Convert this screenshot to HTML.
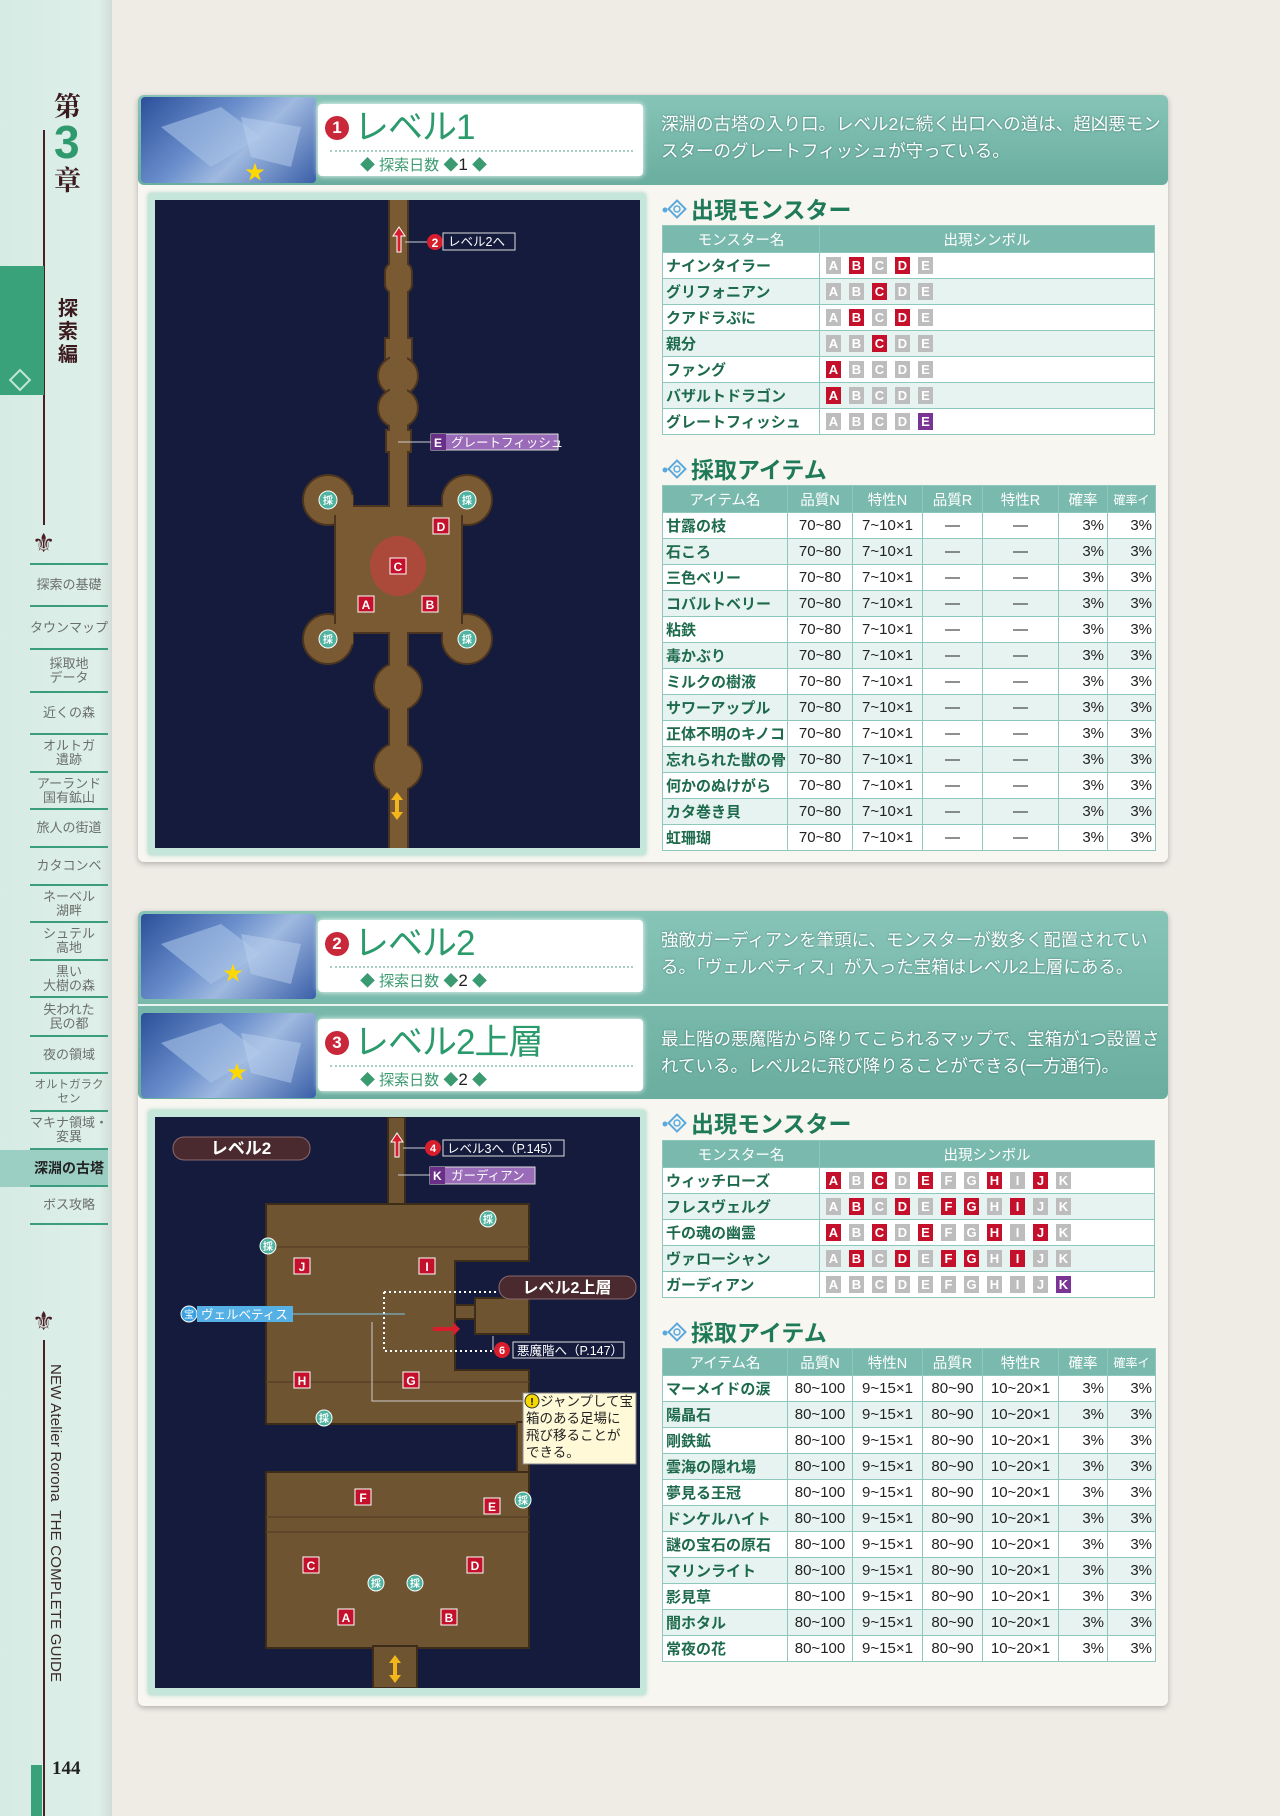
<!DOCTYPE html>
<html><head><meta charset="utf-8">
<style>
*{margin:0;padding:0;box-sizing:border-box}
body{width:1280px;height:1816px;position:relative;overflow:hidden;background:#efebe5;font-family:"Liberation Sans","Noto Sans CJK JP",sans-serif}
.abs{position:absolute}
#side{left:0;top:0;width:112px;height:1816px;background:linear-gradient(90deg,#d6ebe4 0%,#deefe9 88%,#d2dcd7 100%)}
.nav{position:absolute;left:30px;width:78px;text-align:center;color:#6b6f6c;font-size:13px;line-height:14px;display:flex;align-items:center;justify-content:center;border-bottom:2px solid #3c9c7e}
.panel{position:absolute;left:138px;width:1030px;background:#f8f6f1;border-radius:6px;box-shadow:0 2px 6px rgba(0,0,0,.25)}
.hbar{position:absolute;left:138px;width:1030px;background:linear-gradient(180deg,#86c4b7,#6aae9f);border-radius:6px}
.thumb{position:absolute;left:141px;width:175px;border-radius:4px;background:linear-gradient(135deg,#2c4f9a,#6b8fcc 40%,#9fb9e0 60%,#3a5fa8);overflow:hidden}
.tbox{position:absolute;left:318px;width:325px;background:#fff;border-radius:4px;box-shadow:0 0 6px #fff}
.num{position:absolute;width:24px;height:24px;border-radius:50%;background:#c8283a;color:#fff;font-weight:bold;font-size:17px;text-align:center;line-height:24px}
.ttl{position:absolute;color:#2b9a6c;font-size:35px;line-height:40px;letter-spacing:-1px}
.dots{position:absolute;left:12px;right:10px;border-top:2px dotted #a8cfc2}
.days{position:absolute;color:#3a9a70;font-size:15px}
.days b{color:#222;font-weight:normal;font-size:17px}
.desc{position:absolute;left:661px;width:500px;color:#fff;font-size:17.5px;line-height:27px;text-shadow:0 0 2px rgba(0,60,50,.5)}
.sec{position:absolute;left:661px;color:#1f7a5a;font-size:23px;font-weight:bold;line-height:26px}
.sec i{display:inline-block;width:30px;height:22px;vertical-align:-3px;position:relative}
table{position:absolute;border-collapse:collapse;table-layout:fixed;left:662px;width:493px}
td,th{border:1.5px solid #8ec8bc;font-size:15px;height:26px;padding:0 3px;white-space:nowrap;overflow:hidden}
th{background:#7ab9ad;color:#fff;font-weight:normal;font-size:14.5px;height:27px}
tr:nth-child(odd) td{background:#e7f3f1}
tr:nth-child(even) td{background:#fff}
td.n{color:#1d6a4c;font-weight:bold;font-size:15px}
td.c{text-align:center;color:#222}
td.r{text-align:right;color:#222}
td.sy{padding-left:6px}
.s{display:inline-block;width:15px;height:17px;margin-right:8px;background:#bdbdbd;color:#fff;font-size:13px;font-weight:bold;text-align:center;line-height:17px;vertical-align:middle}
.s.R{background:#c4102a}.s.P{background:#7a3494}
.frame{position:absolute;left:148px;width:498px;background:#c5e6da;border-radius:3px;box-shadow:0 0 4px #9fd3c2}
</style></head><body>
<div id="side" class="abs"></div>
<div class="abs" style="left:43px;top:130px;width:2px;height:395px;background:#4a1f26"></div>
<div class="abs" style="left:0;top:266px;width:44px;height:129px;background:#3aa27a"></div>
<div class="abs" style="left:12px;top:372px;width:16px;height:16px;border:2px solid #bfe6d6;transform:rotate(45deg)"></div>
<div class="abs" style="left:54px;top:92px;font-size:27px;font-weight:bold;color:#3b1a20;line-height:30px;font-family:'Liberation Serif','Noto Serif CJK SC',serif">第</div>
<div class="abs" style="left:54px;top:118px;font-size:46px;font-weight:bold;color:#2e9a6e;line-height:48px">3</div>
<div class="abs" style="left:54px;top:166px;font-size:27px;font-weight:bold;color:#3b1a20;line-height:30px;font-family:'Liberation Serif','Noto Serif CJK SC',serif">章</div>
<div class="abs" style="left:58px;top:298px;width:22px;font-size:20px;font-weight:bold;color:#3b1a20;line-height:23px">探索編</div>
<div class="abs" style="left:32px;top:528px;font-size:26px;color:#4a1f26">⚜</div>
<div class="abs" style="left:30px;top:563px;width:78px;border-top:2px solid #3c9c7e"></div>
<div class="nav" style="top:565px;height:42px">探索の基礎</div>
<div class="nav" style="top:607px;height:43px">タウンマップ</div>
<div class="nav" style="top:650px;height:43px">採取地<br>データ</div>
<div class="nav" style="top:693px;height:42px">近くの森</div>
<div class="nav" style="top:735px;height:38px">オルトガ<br>遺跡</div>
<div class="nav" style="top:773px;height:37px">アーランド<br>国有鉱山</div>
<div class="nav" style="top:810px;height:38px">旅人の街道</div>
<div class="nav" style="top:848px;height:38px">カタコンベ</div>
<div class="nav" style="top:886px;height:37px">ネーベル<br>湖畔</div>
<div class="nav" style="top:923px;height:38px">シュテル<br>高地</div>
<div class="nav" style="top:961px;height:37px">黒い<br>大樹の森</div>
<div class="nav" style="top:998px;height:39px">失われた<br>民の都</div>
<div class="nav" style="top:1037px;height:37px">夜の領域</div>
<div class="nav" style="top:1074px;height:38px;font-size:11.5px">オルトガラクセン</div>
<div class="nav" style="top:1112px;height:38px">マキナ領域・<br>変異</div>
<div class="abs" style="left:0;top:1150px;width:108px;height:37px;background:#9ccfc3"></div>
<div class="nav" style="top:1150px;height:37px;color:#222;font-weight:bold;font-size:14px">深淵の古塔</div>
<div class="nav" style="top:1187px;height:38px">ボス攻略</div>
<div class="abs" style="left:32px;top:1306px;font-size:26px;color:#4a1f26">⚜</div>
<div class="abs" style="left:43px;top:1340px;width:2px;height:476px;background:#4a1f26"></div>
<div class="abs" style="left:47px;top:1364px;writing-mode:vertical-rl;font-size:15px;color:#3b2a2a;letter-spacing:0.2px">NEW Atelier Rorona&nbsp; THE COMPLETE GUIDE</div>
<div class="abs" style="left:31px;top:1765px;width:11px;height:51px;background:#3aa27a"></div>
<div class="abs" style="left:52px;top:1758px;font-size:19px;font-weight:bold;color:#222;font-family:'Liberation Serif',serif">144</div>

<!-- PANEL 1 -->
<div class="panel" style="top:95px;height:767px"></div>
<div class="hbar" style="top:95px;height:90px"></div>
<div class="thumb" style="top:97px;height:86px"><svg width="175" height="86"><path d="M20 30 L80 10 L120 40 L70 70Z" fill="#a9c3e6" opacity=".6"/><path d="M100 20 L160 30 L150 70 L110 60Z" fill="#b9cfee" opacity=".5"/><text x="104" y="82" fill="#ffd800" font-size="20">★</text></svg></div>
<div class="tbox" style="top:104px;height:72px">
<div class="num" style="left:7px;top:12px">1</div><div class="ttl" style="left:36px;top:4px">レベル1</div>
<div class="dots" style="top:46px"></div><div class="days" style="left:42px;top:50px">◆ 探索日数 ◆<b>1</b> ◆</div></div>
<div class="desc" style="top:111px">深淵の古塔の入り口。レベル2に続く出口への道は、超凶悪モンスターのグレートフィッシュが守っている。</div>

<div class="frame" style="top:193px;height:662px"></div>
<svg class="abs" style="left:155px;top:200px" width="485" height="648" font-family="Liberation Sans,Noto Sans CJK JP,sans-serif">
<rect width="485" height="648" fill="#151b3c"/>
<g fill="#7a5a32" stroke="#4b3520" stroke-width="2">
<rect x="234" y="0" width="19" height="648"/>
<rect x="230" y="62" width="27" height="32" rx="10"/>
<rect x="230" y="138" width="27" height="26"/>
<circle cx="243" cy="176" r="20"/><circle cx="243" cy="208" r="20"/>
<rect x="231" y="230" width="25" height="22"/>
<circle cx="173" cy="300" r="25"/><circle cx="312" cy="300" r="25"/><circle cx="173" cy="439" r="25"/><circle cx="312" cy="439" r="25"/>
<rect x="180" y="306" width="127" height="127"/>
<circle cx="243" cy="487" r="24"/><circle cx="243" cy="567" r="24"/>
</g>
<g fill="#7a5a32"><rect x="235" y="0" width="17" height="648"/><rect x="181" y="307" width="125" height="125"/><rect x="178" y="295" width="20" height="20"/><rect x="288" y="295" width="20" height="20"/><rect x="178" y="424" width="20" height="20"/><rect x="288" y="424" width="20" height="20"/></g>
<ellipse cx="243" cy="366" rx="28" ry="30" fill="#b8463c" opacity=".8"/>
<path d="M242 52 v-16 h-4 l6 -9 l6 9 h-4 v16z" fill="#d81e2d" stroke="#fff"/>
<line x1="250" y1="42" x2="272" y2="42" stroke="#ccc"/>
<circle cx="280" cy="42" r="8" fill="#d81e2d"/><text x="280" y="47" fill="#fff" font-size="12" text-anchor="middle" font-weight="bold">2</text>
<rect x="288" y="33" width="72" height="17" fill="#151b3c" stroke="#ddd"/><text x="293" y="46" fill="#fff" font-size="12.5">レベル2へ</text>
<line x1="243" y1="242" x2="276" y2="242" stroke="#ccc"/>
<rect x="276" y="234" width="127" height="16" fill="#9a6bb8" stroke="#ddd"/><rect x="276" y="234" width="15" height="16" fill="#6a2f86"/>
<text x="279" y="247" fill="#fff" font-size="12" font-weight="bold">E</text><text x="296" y="247" fill="#fff" font-size="12.5">グレートフィッシュ</text>
<g font-size="12" font-weight="bold" fill="#fff" text-anchor="middle">
<rect x="278" y="318" width="16" height="16" fill="#c4102a" stroke="#fff"/><text x="286" y="331">D</text>
<rect x="235" y="358" width="16" height="16" fill="#c4102a" stroke="#fff"/><text x="243" y="371">C</text>
<rect x="203" y="396" width="16" height="16" fill="#c4102a" stroke="#fff"/><text x="211" y="409">A</text>
<rect x="267" y="396" width="16" height="16" fill="#c4102a" stroke="#fff"/><text x="275" y="409">B</text>
</g>
<g font-size="10" fill="#fff" text-anchor="middle" font-weight="bold">
<circle cx="173" cy="300" r="9" fill="#4fb3a0" stroke="#fff"/><text x="173" y="304">採</text>
<circle cx="312" cy="300" r="9" fill="#4fb3a0" stroke="#fff"/><text x="312" y="304">採</text>
<circle cx="173" cy="439" r="9" fill="#4fb3a0" stroke="#fff"/><text x="173" y="443">採</text>
<circle cx="312" cy="439" r="9" fill="#4fb3a0" stroke="#fff"/><text x="312" y="443">採</text>
</g>
<path d="M242 592 l-6 8 h4 v12 h-4 l6 8 l6 -8 h-4 v-12 h4z" fill="#f2b51c"/>
</svg>

<div class="sec" style="top:197px"><i><svg width="28" height="22"><circle cx="4" cy="11" r="2.5" fill="#5aa9dc"/><rect x="10" y="4" width="12" height="12" transform="rotate(45 16 10)" fill="none" stroke="#5aa9dc" stroke-width="2"/><circle cx="16" cy="10" r="3" fill="none" stroke="#5aa9dc" stroke-width="1.5"/></svg></i>出現モンスター</div>
<table style="top:225px">
<colgroup><col style="width:157px"><col></colgroup>
<tr><th>モンスター名</th><th>出現シンボル</th></tr>
<tr><td class="n">ナインタイラー</td><td class="sy"><span class="s">A</span><span class="s R">B</span><span class="s">C</span><span class="s R">D</span><span class="s">E</span></td></tr>
<tr><td class="n">グリフォニアン</td><td class="sy"><span class="s">A</span><span class="s">B</span><span class="s R">C</span><span class="s">D</span><span class="s">E</span></td></tr>
<tr><td class="n">クアドラぷに</td><td class="sy"><span class="s">A</span><span class="s R">B</span><span class="s">C</span><span class="s R">D</span><span class="s">E</span></td></tr>
<tr><td class="n">親分</td><td class="sy"><span class="s">A</span><span class="s">B</span><span class="s R">C</span><span class="s">D</span><span class="s">E</span></td></tr>
<tr><td class="n">ファング</td><td class="sy"><span class="s R">A</span><span class="s">B</span><span class="s">C</span><span class="s">D</span><span class="s">E</span></td></tr>
<tr><td class="n">バザルトドラゴン</td><td class="sy"><span class="s R">A</span><span class="s">B</span><span class="s">C</span><span class="s">D</span><span class="s">E</span></td></tr>
<tr><td class="n">グレートフィッシュ</td><td class="sy"><span class="s">A</span><span class="s">B</span><span class="s">C</span><span class="s">D</span><span class="s P">E</span></td></tr>
</table>

<div class="sec" style="top:457px"><i><svg width="28" height="22"><circle cx="4" cy="11" r="2.5" fill="#5aa9dc"/><rect x="10" y="4" width="12" height="12" transform="rotate(45 16 10)" fill="none" stroke="#5aa9dc" stroke-width="2"/><circle cx="16" cy="10" r="3" fill="none" stroke="#5aa9dc" stroke-width="1.5"/></svg></i>採取アイテム</div>
<table style="top:485px">
<colgroup><col style="width:125px"><col style="width:65px"><col style="width:70px"><col style="width:60px"><col style="width:76px"><col style="width:49px"><col style="width:48px"></colgroup>
<tr><th>アイテム名</th><th>品質N</th><th>特性N</th><th>品質R</th><th>特性R</th><th>確率</th><th style="font-size:12px">確率イ</th></tr>
<tr><td class="n">甘露の枝</td><td class="c">70~80</td><td class="c">7~10×1</td><td class="c">—</td><td class="c">—</td><td class="r">3%</td><td class="r">3%</td></tr>
<tr><td class="n">石ころ</td><td class="c">70~80</td><td class="c">7~10×1</td><td class="c">—</td><td class="c">—</td><td class="r">3%</td><td class="r">3%</td></tr>
<tr><td class="n">三色ベリー</td><td class="c">70~80</td><td class="c">7~10×1</td><td class="c">—</td><td class="c">—</td><td class="r">3%</td><td class="r">3%</td></tr>
<tr><td class="n">コバルトベリー</td><td class="c">70~80</td><td class="c">7~10×1</td><td class="c">—</td><td class="c">—</td><td class="r">3%</td><td class="r">3%</td></tr>
<tr><td class="n">粘鉄</td><td class="c">70~80</td><td class="c">7~10×1</td><td class="c">—</td><td class="c">—</td><td class="r">3%</td><td class="r">3%</td></tr>
<tr><td class="n">毒かぶり</td><td class="c">70~80</td><td class="c">7~10×1</td><td class="c">—</td><td class="c">—</td><td class="r">3%</td><td class="r">3%</td></tr>
<tr><td class="n">ミルクの樹液</td><td class="c">70~80</td><td class="c">7~10×1</td><td class="c">—</td><td class="c">—</td><td class="r">3%</td><td class="r">3%</td></tr>
<tr><td class="n">サワーアップル</td><td class="c">70~80</td><td class="c">7~10×1</td><td class="c">—</td><td class="c">—</td><td class="r">3%</td><td class="r">3%</td></tr>
<tr><td class="n">正体不明のキノコ</td><td class="c">70~80</td><td class="c">7~10×1</td><td class="c">—</td><td class="c">—</td><td class="r">3%</td><td class="r">3%</td></tr>
<tr><td class="n">忘れられた獣の骨</td><td class="c">70~80</td><td class="c">7~10×1</td><td class="c">—</td><td class="c">—</td><td class="r">3%</td><td class="r">3%</td></tr>
<tr><td class="n">何かのぬけがら</td><td class="c">70~80</td><td class="c">7~10×1</td><td class="c">—</td><td class="c">—</td><td class="r">3%</td><td class="r">3%</td></tr>
<tr><td class="n">カタ巻き貝</td><td class="c">70~80</td><td class="c">7~10×1</td><td class="c">—</td><td class="c">—</td><td class="r">3%</td><td class="r">3%</td></tr>
<tr><td class="n">虹珊瑚</td><td class="c">70~80</td><td class="c">7~10×1</td><td class="c">—</td><td class="c">—</td><td class="r">3%</td><td class="r">3%</td></tr>
</table>

<!-- PANEL 2 -->
<div class="panel" style="top:911px;height:795px"></div>
<div class="hbar" style="top:911px;height:188px"></div>
<div class="abs" style="left:138px;top:1004px;width:1030px;height:2px;background:#e6f3ef"></div>
<div class="thumb" style="top:914px;height:85px"><svg width="175" height="85"><path d="M20 30 L80 10 L120 40 L70 70Z" fill="#a9c3e6" opacity=".6"/><path d="M100 20 L160 30 L150 70 L110 60Z" fill="#b9cfee" opacity=".5"/><text x="82" y="66" fill="#ffd800" font-size="20">★</text></svg></div>
<div class="tbox" style="top:920px;height:72px">
<div class="num" style="left:7px;top:12px">2</div><div class="ttl" style="left:36px;top:4px">レベル2</div>
<div class="dots" style="top:46px"></div><div class="days" style="left:42px;top:50px">◆ 探索日数 ◆<b>2</b> ◆</div></div>
<div class="desc" style="top:927px">強敵ガーディアンを筆頭に、モンスターが数多く配置されている。「ヴェルベティス」が入った宝箱はレベル2上層にある。</div>
<div class="thumb" style="top:1013px;height:85px"><svg width="175" height="85"><path d="M20 30 L80 10 L120 40 L70 70Z" fill="#a9c3e6" opacity=".6"/><path d="M100 20 L160 30 L150 70 L110 60Z" fill="#b9cfee" opacity=".5"/><text x="86" y="66" fill="#ffd800" font-size="20">★</text></svg></div>
<div class="tbox" style="top:1019px;height:72px">
<div class="num" style="left:7px;top:12px">3</div><div class="ttl" style="left:36px;top:4px">レベル2上層</div>
<div class="dots" style="top:46px"></div><div class="days" style="left:42px;top:50px">◆ 探索日数 ◆<b>2</b> ◆</div></div>
<div class="desc" style="top:1026px">最上階の悪魔階から降りてこられるマップで、宝箱が1つ設置されている。レベル2に飛び降りることができる(一方通行)。</div>

<div class="frame" style="top:1110px;height:585px"></div>
<svg class="abs" style="left:155px;top:1117px" width="485" height="571" font-family="Liberation Sans,Noto Sans CJK JP,sans-serif">
<rect width="485" height="571" fill="#151b3c"/>
<g fill="#6e5431" stroke="#3e2c1a" stroke-width="2">
<rect x="233" y="0" width="17" height="90"/>
<path d="M111 87 H374 V144 H300 V253 H374 V307 H111Z"/>
<rect x="300" y="188" width="20" height="14"/>
<rect x="320" y="181" width="54" height="36"/>
<rect x="362" y="305" width="12" height="50"/>
<rect x="111" y="355" width="263" height="176"/>
<rect x="218" y="529" width="44" height="42"/>
</g>
<g stroke="#5a4226" stroke-width="1.5"><line x1="111" y1="130" x2="374" y2="130"/><line x1="111" y1="265" x2="374" y2="265"/><line x1="111" y1="400" x2="374" y2="400"/><line x1="111" y1="415" x2="374" y2="415"/></g>
<rect x="18" y="20" width="137" height="23" rx="11" fill="#4a2a2e" stroke="#8a6a6e"/>
<text x="86" y="37" fill="#fff" font-size="17" font-weight="bold" text-anchor="middle">レベル2</text>
<path d="M240 40 v-15 h-4 l6 -9 l6 9 h-4 v15z" fill="#d81e2d" stroke="#fff"/>
<line x1="248" y1="31" x2="271" y2="31" stroke="#ccc"/>
<circle cx="278" cy="31" r="8" fill="#d81e2d"/><text x="278" y="35" fill="#fff" font-size="11" text-anchor="middle" font-weight="bold">4</text>
<rect x="288" y="23" width="121" height="16" fill="#151b3c" stroke="#ddd"/><text x="292" y="36" fill="#fff" font-size="12.5">レベル3へ（P.145）</text>
<line x1="243" y1="58" x2="275" y2="58" stroke="#ccc"/>
<rect x="275" y="50" width="105" height="17" fill="#9a6bb8" stroke="#ddd"/><rect x="275" y="50" width="15" height="17" fill="#6a2f86"/>
<text x="278" y="63" fill="#fff" font-size="12" font-weight="bold">K</text><text x="296" y="63" fill="#fff" font-size="12.5">ガーディアン</text>
<rect x="344" y="159" width="137" height="23" rx="11" fill="#4a2a2e" stroke="#8a6a6e"/>
<text x="412" y="176" fill="#fff" font-size="16" font-weight="bold" text-anchor="middle">レベル2上層</text>
<path d="M229 175 H343 M229 175 V234 H343" fill="none" stroke="#fff" stroke-width="2" stroke-dasharray="2 3"/>
<line x1="138" y1="197" x2="250" y2="197" stroke="#7fc6ea"/>
<circle cx="34" cy="197" r="8" fill="#3a9fe0" stroke="#fff"/><text x="34" y="201" fill="#fff" font-size="10" text-anchor="middle">宝</text>
<rect x="42" y="189" width="96" height="16" fill="#55b0e6"/><text x="46" y="202" fill="#fff" font-size="12.5">ヴェルベティス</text>
<path d="M278 210 h20 v-5 l7 7 l-7 7 v-5 h-20z" fill="#d81e2d"/>
<line x1="338" y1="219" x2="338" y2="233" stroke="#ccc"/>
<circle cx="347" cy="233" r="8" fill="#d81e2d"/><text x="347" y="237" fill="#fff" font-size="11" text-anchor="middle" font-weight="bold">6</text>
<rect x="358" y="225" width="111" height="16" fill="#151b3c" stroke="#ddd"/><text x="362" y="238" fill="#fff" font-size="12.5">悪魔階へ（P.147）</text>
<path d="M217 205 V284 H368" fill="none" stroke="#ccc"/>
<rect x="368" y="276" width="113" height="71" fill="#fff9d8" stroke="#888"/>
<circle cx="377" cy="284" r="7" fill="#f4d800" stroke="#333"/><text x="377" y="288" font-size="10" text-anchor="middle" font-weight="bold">!</text>
<text font-size="13.5" fill="#222"><tspan x="385" y="289">ジャンプして宝</tspan><tspan x="371" y="306">箱のある足場に</tspan><tspan x="371" y="323">飛び移ることが</tspan><tspan x="371" y="340">できる。</tspan></text>
<g font-size="12" font-weight="bold" fill="#fff" text-anchor="middle">
<rect x="139" y="141" width="16" height="16" fill="#c4102a" stroke="#fff"/><text x="147" y="154">J</text>
<rect x="264" y="141" width="16" height="16" fill="#c4102a" stroke="#fff"/><text x="272" y="154">I</text>
<rect x="139" y="255" width="16" height="16" fill="#c4102a" stroke="#fff"/><text x="147" y="268">H</text>
<rect x="248" y="255" width="16" height="16" fill="#c4102a" stroke="#fff"/><text x="256" y="268">G</text>
<rect x="200" y="372" width="16" height="16" fill="#c4102a" stroke="#fff"/><text x="208" y="385">F</text>
<rect x="329" y="381" width="16" height="16" fill="#c4102a" stroke="#fff"/><text x="337" y="394">E</text>
<rect x="148" y="440" width="16" height="16" fill="#c4102a" stroke="#fff"/><text x="156" y="453">C</text>
<rect x="312" y="440" width="16" height="16" fill="#c4102a" stroke="#fff"/><text x="320" y="453">D</text>
<rect x="183" y="492" width="16" height="16" fill="#c4102a" stroke="#fff"/><text x="191" y="505">A</text>
<rect x="286" y="492" width="16" height="16" fill="#c4102a" stroke="#fff"/><text x="294" y="505">B</text>
</g>
<g font-size="10" fill="#fff" text-anchor="middle" font-weight="bold">
<circle cx="333" cy="102" r="8" fill="#4fb3a0" stroke="#fff"/><text x="333" y="106">採</text>
<circle cx="113" cy="129" r="8" fill="#4fb3a0" stroke="#fff"/><text x="113" y="133">採</text>
<circle cx="169" cy="301" r="8" fill="#4fb3a0" stroke="#fff"/><text x="169" y="305">採</text>
<circle cx="368" cy="383" r="8" fill="#4fb3a0" stroke="#fff"/><text x="368" y="387">採</text>
<circle cx="221" cy="466" r="8" fill="#4fb3a0" stroke="#fff"/><text x="221" y="470">採</text>
<circle cx="260" cy="466" r="8" fill="#4fb3a0" stroke="#fff"/><text x="260" y="470">採</text>
</g>
<path d="M240 538 l-6 8 h4 v12 h-4 l6 8 l6 -8 h-4 v-12 h4z" fill="#f2b51c"/>
</svg>

<div class="sec" style="top:1111px"><i><svg width="28" height="22"><circle cx="4" cy="11" r="2.5" fill="#5aa9dc"/><rect x="10" y="4" width="12" height="12" transform="rotate(45 16 10)" fill="none" stroke="#5aa9dc" stroke-width="2"/><circle cx="16" cy="10" r="3" fill="none" stroke="#5aa9dc" stroke-width="1.5"/></svg></i>出現モンスター</div>
<table style="top:1140px">
<colgroup><col style="width:157px"><col></colgroup>
<tr><th>モンスター名</th><th>出現シンボル</th></tr>
<tr><td class="n">ウィッチローズ</td><td class="sy"><span class="s R">A</span><span class="s">B</span><span class="s R">C</span><span class="s">D</span><span class="s R">E</span><span class="s">F</span><span class="s">G</span><span class="s R">H</span><span class="s">I</span><span class="s R">J</span><span class="s">K</span></td></tr>
<tr><td class="n">フレスヴェルグ</td><td class="sy"><span class="s">A</span><span class="s R">B</span><span class="s">C</span><span class="s R">D</span><span class="s">E</span><span class="s R">F</span><span class="s R">G</span><span class="s">H</span><span class="s R">I</span><span class="s">J</span><span class="s">K</span></td></tr>
<tr><td class="n">千の魂の幽霊</td><td class="sy"><span class="s R">A</span><span class="s">B</span><span class="s R">C</span><span class="s">D</span><span class="s R">E</span><span class="s">F</span><span class="s">G</span><span class="s R">H</span><span class="s">I</span><span class="s R">J</span><span class="s">K</span></td></tr>
<tr><td class="n">ヴァローシャン</td><td class="sy"><span class="s">A</span><span class="s R">B</span><span class="s">C</span><span class="s R">D</span><span class="s">E</span><span class="s R">F</span><span class="s R">G</span><span class="s">H</span><span class="s R">I</span><span class="s">J</span><span class="s">K</span></td></tr>
<tr><td class="n">ガーディアン</td><td class="sy"><span class="s">A</span><span class="s">B</span><span class="s">C</span><span class="s">D</span><span class="s">E</span><span class="s">F</span><span class="s">G</span><span class="s">H</span><span class="s">I</span><span class="s">J</span><span class="s P">K</span></td></tr>
</table>

<div class="sec" style="top:1320px"><i><svg width="28" height="22"><circle cx="4" cy="11" r="2.5" fill="#5aa9dc"/><rect x="10" y="4" width="12" height="12" transform="rotate(45 16 10)" fill="none" stroke="#5aa9dc" stroke-width="2"/><circle cx="16" cy="10" r="3" fill="none" stroke="#5aa9dc" stroke-width="1.5"/></svg></i>採取アイテム</div>
<table style="top:1348px">
<colgroup><col style="width:125px"><col style="width:65px"><col style="width:70px"><col style="width:60px"><col style="width:76px"><col style="width:49px"><col style="width:48px"></colgroup>
<tr><th>アイテム名</th><th>品質N</th><th>特性N</th><th>品質R</th><th>特性R</th><th>確率</th><th style="font-size:12px">確率イ</th></tr>
<tr><td class="n">マーメイドの涙</td><td class="c">80~100</td><td class="c">9~15×1</td><td class="c">80~90</td><td class="c">10~20×1</td><td class="r">3%</td><td class="r">3%</td></tr>
<tr><td class="n">陽晶石</td><td class="c">80~100</td><td class="c">9~15×1</td><td class="c">80~90</td><td class="c">10~20×1</td><td class="r">3%</td><td class="r">3%</td></tr>
<tr><td class="n">剛鉄鉱</td><td class="c">80~100</td><td class="c">9~15×1</td><td class="c">80~90</td><td class="c">10~20×1</td><td class="r">3%</td><td class="r">3%</td></tr>
<tr><td class="n">雲海の隠れ場</td><td class="c">80~100</td><td class="c">9~15×1</td><td class="c">80~90</td><td class="c">10~20×1</td><td class="r">3%</td><td class="r">3%</td></tr>
<tr><td class="n">夢見る王冠</td><td class="c">80~100</td><td class="c">9~15×1</td><td class="c">80~90</td><td class="c">10~20×1</td><td class="r">3%</td><td class="r">3%</td></tr>
<tr><td class="n">ドンケルハイト</td><td class="c">80~100</td><td class="c">9~15×1</td><td class="c">80~90</td><td class="c">10~20×1</td><td class="r">3%</td><td class="r">3%</td></tr>
<tr><td class="n">謎の宝石の原石</td><td class="c">80~100</td><td class="c">9~15×1</td><td class="c">80~90</td><td class="c">10~20×1</td><td class="r">3%</td><td class="r">3%</td></tr>
<tr><td class="n">マリンライト</td><td class="c">80~100</td><td class="c">9~15×1</td><td class="c">80~90</td><td class="c">10~20×1</td><td class="r">3%</td><td class="r">3%</td></tr>
<tr><td class="n">影見草</td><td class="c">80~100</td><td class="c">9~15×1</td><td class="c">80~90</td><td class="c">10~20×1</td><td class="r">3%</td><td class="r">3%</td></tr>
<tr><td class="n">闇ホタル</td><td class="c">80~100</td><td class="c">9~15×1</td><td class="c">80~90</td><td class="c">10~20×1</td><td class="r">3%</td><td class="r">3%</td></tr>
<tr><td class="n">常夜の花</td><td class="c">80~100</td><td class="c">9~15×1</td><td class="c">80~90</td><td class="c">10~20×1</td><td class="r">3%</td><td class="r">3%</td></tr>
</table>
</body></html>
